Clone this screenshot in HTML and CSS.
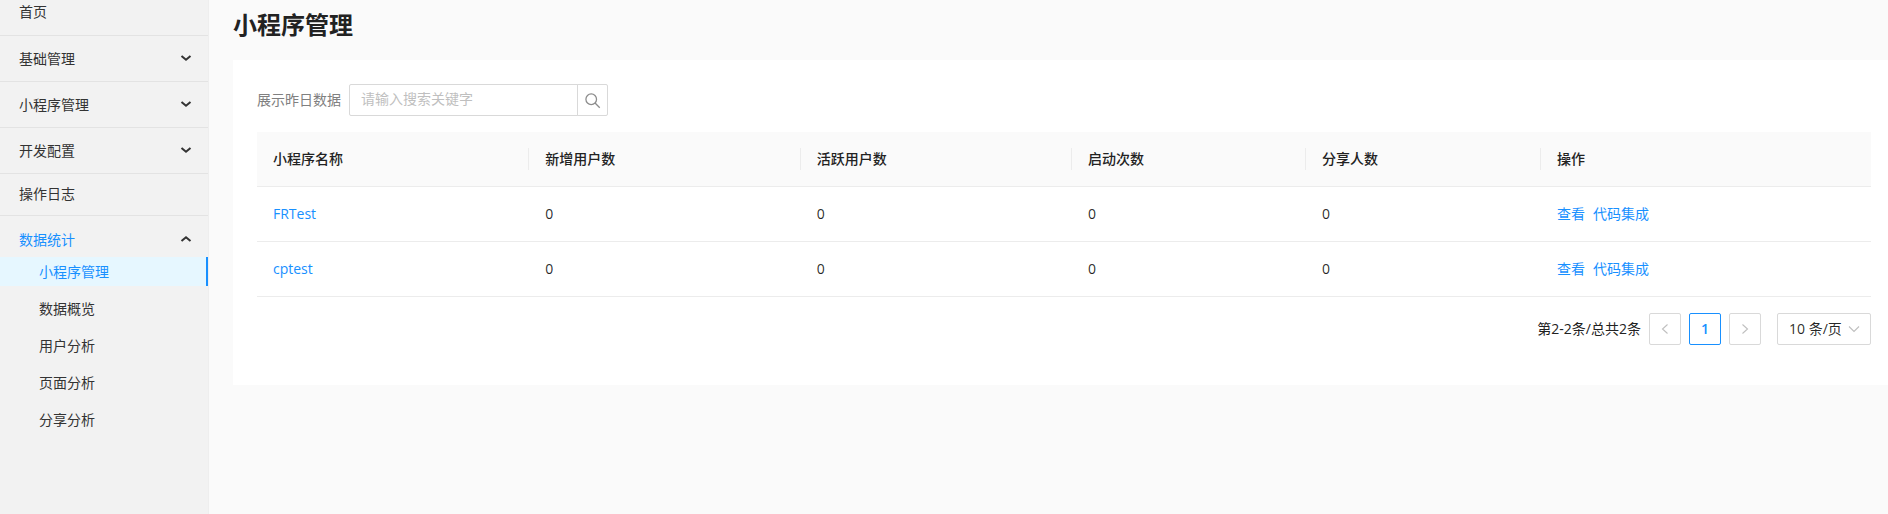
FILE: index.html
```html
<!DOCTYPE html>
<html lang="zh-CN">
<head>
<meta charset="utf-8">
<title>小程序管理</title>
<link rel="stylesheet" href="styles.css">
</head>
<body>
<div class="app">
  <aside class="sidebar">
    <div class="menu-item first">首页</div>
    <div class="menu-item sub">基础管理<svg class="chev" viewBox="0 0 12 12"><path d="M1.500 4l4.500 3.800L10.500 4"/></svg></div>
    <div class="menu-item sub">小程序管理<svg class="chev" viewBox="0 0 12 12"><path d="M1.500 4l4.500 3.800L10.500 4"/></svg></div>
    <div class="menu-item sub">开发配置<svg class="chev" viewBox="0 0 12 12"><path d="M1.500 4l4.500 3.800L10.500 4"/></svg></div>
    <div class="menu-item log">操作日志</div>
    <div class="menu-open"><span>数据统计</span><svg class="chev" viewBox="0 0 12 12"><path d="M1.500 8l4.500-3.800L10.500 8"/></svg></div>
    <div class="sub-item active">小程序管理</div>
    <div class="sub-item">数据概览</div>
    <div class="sub-item">用户分析</div>
    <div class="sub-item">页面分析</div>
    <div class="sub-item">分享分析</div>
  </aside>
  <main class="main">
    <h1 class="title">小程序管理</h1>
    <section class="card">
      <div class="filter">
        <span class="filter-label">展示昨日数据</span>
        <div class="search">
          <div class="search-input">请输入搜索关键字</div>
          <div class="search-btn"><svg viewBox="0 0 16 16" width="17" height="17"><circle cx="6.800" cy="6.800" r="5"/><path d="M10.400 10.400l4.400 4.400"/></svg></div>
        </div>
      </div>
      <div class="table">
        <div class="row head">
          <div class="cell">小程序名称</div>
          <div class="cell">新增用户数</div>
          <div class="cell">活跃用户数</div>
          <div class="cell">启动次数</div>
          <div class="cell">分享人数</div>
          <div class="cell">操作</div>
        </div>
        <div class="row">
          <div class="cell"><a class="link">FRTest</a></div>
          <div class="cell">0</div>
          <div class="cell">0</div>
          <div class="cell">0</div>
          <div class="cell">0</div>
          <div class="cell actions"><a class="link">查看</a><a class="link">代码集成</a></div>
        </div>
        <div class="row">
          <div class="cell"><a class="link">cptest</a></div>
          <div class="cell">0</div>
          <div class="cell">0</div>
          <div class="cell">0</div>
          <div class="cell">0</div>
          <div class="cell actions"><a class="link">查看</a><a class="link">代码集成</a></div>
        </div>
      </div>
      <div class="pager">
        <span class="total">第2-2条/总共2条</span>
        <div class="page-btn"><svg viewBox="0 0 12 12" width="12" height="12"><path d="M8.500 1.500L3.500 6l5 4.500"/></svg></div>
        <div class="page-btn current">1</div>
        <div class="page-btn"><svg viewBox="0 0 12 12" width="12" height="12"><path d="M3.500 1.500L8.500 6l-5 4.500"/></svg></div>
        <div class="page-size"><span class="size-text">10 条/页</span><svg viewBox="0 0 12 12" width="12" height="12"><path d="M1 3.500l5 5 5-5"/></svg></div>
      </div>
    </section>
  </main>
</div>
</body>
</html>
```

FILE: styles.css
```css
* { box-sizing: border-box; }
html, body { margin: 0; height: 100%; overflow: hidden; }
body {
  font-family: "Open Sans", "Noto Sans CJK SC", sans-serif;
  font-size: 14px;
  color: rgba(0, 0, 0, 0.85);
  background: #fafafa;
}
.app { display: flex; height: 514px; }
.sidebar {
  width: 209px;
  flex: none;
  background: #f2f2f2;
  border-right: 1px solid #eee;
  color: #333;
}
.menu-item {
  display: flex;
  align-items: center;
  justify-content: space-between;
  height: 46px;
  padding: 0 16px 2px 19px;
  border-bottom: 1px solid #e3e3e3;
}
.menu-item.first { height: 36px; padding-bottom: 14px; }
.menu-item.log { height: 42px; padding-bottom: 4px; }
.chev { width: 12px; height: 12px; }
.chev path { fill: none; stroke: #333; stroke-width: 2; }
.menu-open {
  display: flex;
  align-items: center;
  justify-content: space-between;
  height: 41px;
  padding: 4px 16px 0 19px;
  color: #1890ff;
}
.sub-item {
  display: flex;
  align-items: center;
  height: 29px;
  margin-bottom: 8px;
  padding: 0 0 2px 39px;
}
.sub-item.active {
  color: #1890ff;
  background: #e6f7ff;
  border-right: 2px solid #1890ff;
}
.main { flex: 1; min-width: 0; padding: 0 0 0 24px; }
.title {
  margin: 0;
  height: 60px;
  padding-top: 8px;
  font-size: 24px;
  line-height: 34px;
  font-weight: 700;
  color: #222;
}
.card { height: 325px; background: #fff; padding: 24px 17px 0 24px; }
.filter { display: flex; align-items: center; height: 32px; }
.filter-label { color: #808080; margin: 0 8px 2px 0; }
.search { display: flex; height: 32px; }
.search-input {
  width: 229px;
  padding: 0 11px;
  line-height: 28px;
  border: 1px solid #d9d9d9;
  border-radius: 2px 0 0 2px;
  color: #bfbfbf;
}
.search-btn {
  width: 31px;
  margin-left: -1px;
  display: flex;
  align-items: center;
  justify-content: center;
  border: 1px solid #d9d9d9;
  border-radius: 0 2px 2px 0;
}
.search-btn svg { fill: none; stroke: #8c8c8c; stroke-width: 1.200; }
.table { margin-top: 16px; }
.row {
  display: grid;
  grid-template-columns: 271.33px 271.33px 271.34px 234px 235px 1fr;
  height: 55px;
  align-items: center;
  border-bottom: 1px solid #ececec;
}
.row.head { background: #fafafa; font-weight: 500; color: #222; }
.cell { padding: 0 0 2px 16px; position: relative; }
.cell + .cell { padding-left: 17px; }
.head .cell + .cell::before {
  content: "";
  position: absolute;
  left: 0;
  top: 50%;
  height: 22px;
  margin-top: -11px;
  border-left: 1px solid #ececec;
}
.link { color: #1890ff; }
.actions { display: flex; gap: 8px; }
.pager { display: flex; align-items: center; justify-content: flex-end; margin-top: 16px; height: 32px; }
.total { margin: 0 8px 2px 0; color: #222; }
.page-btn {
  width: 32px;
  height: 32px;
  margin-right: 8px;
  display: flex;
  align-items: center;
  justify-content: center;
  border: 1px solid #d9d9d9;
  border-radius: 2px;
}
.page-btn svg, .page-size svg { fill: none; stroke: #bfbfbf; stroke-width: 1.100; }
.page-btn.current { border-color: #1890ff; color: #1890ff; font-weight: 600; padding-bottom: 2px; }
.page-size {
  width: 94px;
  height: 32px;
  margin-left: 8px;
  padding: 0 10px 0 11px;
  display: flex;
  align-items: center;
  justify-content: space-between;
  border: 1px solid #d9d9d9;
  border-radius: 2px;
}
.size-text { margin-bottom: 2px; }
```
